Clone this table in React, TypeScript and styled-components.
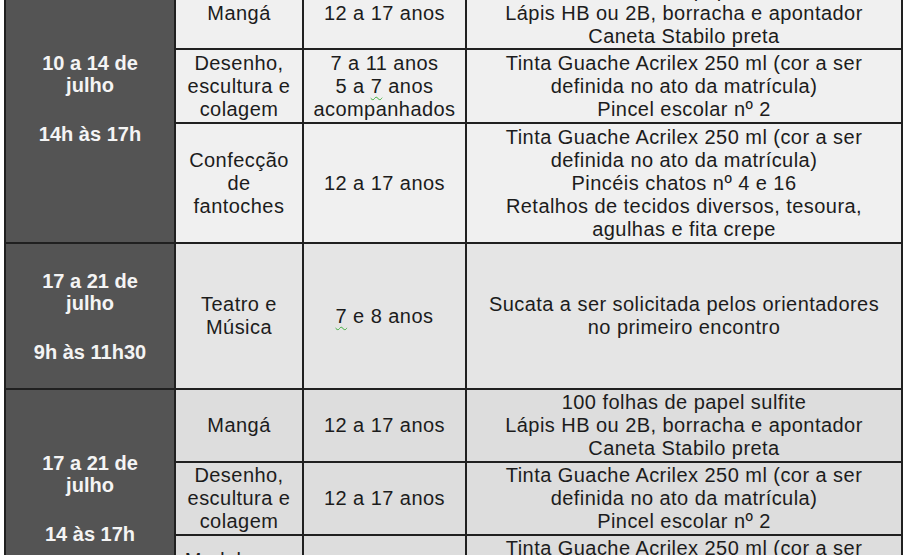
import React from 'react';
import styled, {createGlobalStyle} from 'styled-components';

////// Data //////
type Row = {
  activity: string[];
  ages: React.ReactNode[];
  materials: string[];
  height: number;
};

type Group = {
  dates: string[];
  time: string;
  tone: string;
  lift: number;
  rows: Row[];
};

const Squiggle = styled.span`
  text-decoration: underline wavy #3fae3f;
  text-decoration-thickness: 1px;
  text-underline-offset: 3px;
  text-decoration-skip-ink: none;
`;

const groups: Group[] = [
  {
    dates: ['10 a 14 de', 'julho'],
    time: '14h às 17h',
    tone: '#f0f0f0',
    lift: 24,
    rows: [
      {
        activity: ['Mangá'],
        ages: ['12 a 17 anos'],
        materials: ['100 folhas de papel sulfite', 'Lápis HB ou 2B, borracha e apontador', 'Caneta Stabilo preta'],
        height: 72,
      },
      {
        activity: ['Desenho,', 'escultura e', 'colagem'],
        ages: ['7 a 11 anos', <>5 a <Squiggle>7</Squiggle> anos</>, 'acompanhados'],
        materials: ['Tinta Guache Acrilex 250 ml (cor a ser', 'definida no ato da matrícula)', 'Pincel escolar nº 2'],
        height: 74,
      },
      {
        activity: ['Confecção', 'de', 'fantoches'],
        ages: ['12 a 17 anos'],
        materials: [
          'Tinta Guache Acrilex 250 ml (cor a ser',
          'definida no ato da matrícula)',
          'Pincéis chatos nº 4 e 16',
          'Retalhos de tecidos diversos, tesoura,',
          'agulhas e fita crepe',
        ],
        height: 120,
      },
    ],
  },
  {
    dates: ['17 a 21 de', 'julho'],
    time: '9h às 11h30',
    tone: '#e5e5e5',
    lift: 0,
    rows: [
      {
        activity: ['Teatro e', 'Música'],
        ages: [<><Squiggle>7</Squiggle> e 8 anos</>],
        materials: ['Sucata a ser solicitada pelos orientadores', 'no primeiro encontro'],
        height: 146,
      },
    ],
  },
  {
    dates: ['17 a 21 de', 'julho'],
    time: '14 às 17h',
    tone: '#dddddd',
    lift: 0,
    rows: [
      {
        activity: ['Mangá'],
        ages: ['12 a 17 anos'],
        materials: ['100 folhas de papel sulfite', 'Lápis HB ou 2B, borracha e apontador', 'Caneta Stabilo preta'],
        height: 73,
      },
      {
        activity: ['Desenho,', 'escultura e', 'colagem'],
        ages: ['12 a 17 anos'],
        materials: ['Tinta Guache Acrilex 250 ml (cor a ser', 'definida no ato da matrícula)', 'Pincel escolar nº 2'],
        height: 73,
      },
      {
        activity: ['Modelagem', 'em argila'],
        ages: ['12 a 17 anos'],
        materials: ['Tinta Guache Acrilex 250 ml (cor a ser', 'definida no ato da matrícula)', 'Pincel escolar nº 2'],
        height: 73,
      },
    ],
  },
];

////// Component //////
export default function App() {
  return (
    <>
      <GlobalStyle />
      <Viewport>
        <Schedule>
          <colgroup>
            <col style={{width: 170}} />
            <col style={{width: 128}} />
            <col style={{width: 163}} />
            <col style={{width: 436}} />
          </colgroup>
          <tbody>
            {groups.map((group, gi) =>
              group.rows.map((row, ri) => (
                <tr key={`${gi}-${ri}`} style={{height: row.height}}>
                  {ri === 0 && (
                    <DateCell rowSpan={group.rows.length} $lift={group.lift}>
                      {group.dates.map(d => <div key={d}>{d}</div>)}
                      <TimeLine>{group.time}</TimeLine>
                    </DateCell>
                  )}
                  <Cell $tone={group.tone}>
                    {row.activity.map((l, i) => <Line key={i}>{l}</Line>)}
                  </Cell>
                  <Cell $tone={group.tone}>
                    {row.ages.map((l, i) => <Line key={i}>{l}</Line>)}
                  </Cell>
                  <Cell $tone={group.tone}>
                    {row.materials.map((l, i) => <Line key={i}>{l}</Line>)}
                  </Cell>
                </tr>
              ))
            )}
          </tbody>
        </Schedule>
      </Viewport>
    </>
  );
}

////// Styles //////
const FONT = `"Liberation Sans", Arimo, Arial, sans-serif`;

const GlobalStyle = createGlobalStyle`
  html, body {
    margin: 0;
    padding: 0;
    background: #ffffff;
    font-family: ${FONT};
  }
`;

const Viewport = styled.div`
  width: 915px;
  height: 555px;
  overflow: hidden;
  padding-left: 4px;
  box-sizing: border-box;
`;

const Schedule = styled.table`
  border-collapse: collapse;
  table-layout: fixed;
  width: 897px;
  margin-top: -24px;
  font-family: ${FONT};
`;

const DateCell = styled.td<{$lift: number}>`
  background: #545454;
  color: #f4f4f4;
  border: 2px solid #202020;
  font-family: ${FONT};
  font-weight: bold;
  font-size: 20px;
  line-height: 22px;
  text-align: center;
  vertical-align: middle;
  padding: 0 4px ${p => p.$lift}px;
`;

const TimeLine = styled.div`
  margin-top: 27px;
`;

const Cell = styled.td<{$tone: string}>`
  background: ${p => p.$tone};
  color: #1c1c1c;
  border: 2px solid #202020;
  font-family: ${FONT};
  font-size: 20px;
  line-height: 23px;
  letter-spacing: 0.45px;
  text-align: center;
  vertical-align: middle;
  padding: 0;
  white-space: nowrap;
`;

const Line = styled.div``;
